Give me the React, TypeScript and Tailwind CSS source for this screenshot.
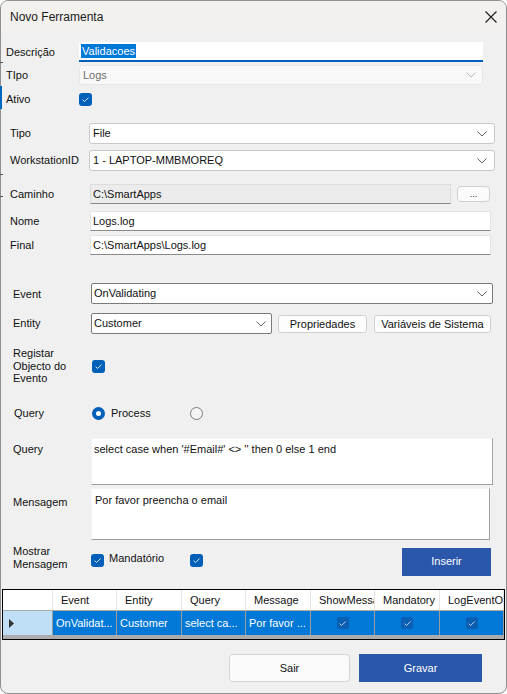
import React from 'react'

const font = "font-['Liberation_Sans',Arial,sans-serif]"

function Tick({ color = '#ffffff' }: { color?: string }) {
  return (
    <svg width="9" height="9" viewBox="0 0 9 9">
      <path d="M1.6 4.7 L3.6 6.5 L7.6 2.5" stroke={color} strokeWidth="1" fill="none" />
    </svg>
  )
}

function CheckBox() {
  return (
    <span className="w-[13px] h-[13px] rounded-[3px] bg-[#005fb8] flex items-center justify-center shrink-0">
      <Tick color="#dbe8f7" />
    </span>
  )
}

function Chevron({ color = '#606060' }: { color?: string }) {
  return (
    <svg width="10" height="6" viewBox="0 0 10 6">
      <path d="M0.5 0.5 L5 5 L9.5 0.5" stroke={color} strokeWidth="1" fill="none" />
    </svg>
  )
}

function Label({ children, className = '' }: { children: React.ReactNode; className?: string }) {
  return <span className={`shrink-0 text-[11px] text-[#111] ${className}`}>{children}</span>
}

function GridHead({ w, children }: { w: string; children?: React.ReactNode }) {
  return (
    <div className={`${w} h-full shrink-0 border-r border-[#e6e6e6] pl-[8px] flex items-center overflow-hidden whitespace-nowrap text-[11px] text-[#111]`}>
      {children}
    </div>
  )
}

function GridCell({ w, children, center }: { w: string; children?: React.ReactNode; center?: boolean }) {
  return (
    <div
      className={`${w} h-full shrink-0 border-r border-[#9c9c9c] flex items-center overflow-hidden whitespace-nowrap text-[11px] text-white bg-[#0078d7] ${
        center ? 'justify-center' : 'pl-[3px]'
      }`}
    >
      {children}
    </div>
  )
}

function GridCheck() {
  return (
    <span className="w-[12px] h-[12px] rounded-[2px] bg-[#0a5fb3] flex items-center justify-center">
      <Tick color="#b9d3ef" />
    </span>
  )
}

export default function App() {
  return (
    <div className={`${font} relative w-[507px] h-[694px] bg-white overflow-hidden`}>
      <div className="w-[507px] h-[694px] rounded-[8px] border border-[#8f8f8f] bg-[#f0f0f0] overflow-hidden flex flex-col">
        {/* title bar */}
        <div className="h-[32px] shrink-0 bg-[#f3f1ee] flex items-center justify-between">
          <span className="pl-[9px] text-[12px] text-[#1a1a1a]">Novo Ferramenta</span>
          <svg width="12" height="12" viewBox="0 0 12 12" className="mr-[9px]">
            <path d="M0.5 0.5 L11.5 11.5 M11.5 0.5 L0.5 11.5" stroke="#1a1a1a" strokeWidth="1.1" />
          </svg>
        </div>

        {/* Descrição */}
        <div className="flex items-center h-[20px] mt-[9px]">
          <Label className="w-[78px] pl-[5px]">Descrição</Label>
          <div className="w-[404px] h-[20px] bg-white border-b-2 border-[#005fb8] flex items-center pl-[2px]">
            <span className="bg-[#0078d7] text-white text-[11px] leading-[14px] px-[1px]">Validacoes</span>
          </div>
        </div>

        {/* TIpo disabled */}
        <div className="flex items-center h-[20px] mt-[3px]">
          <Label className="w-[78px] pl-[5px]">TIpo</Label>
          <div className="w-[404px] h-[20px] bg-[#f9f9f9] border border-[#e6e6e6] rounded-[3px] flex items-center justify-between pl-[3px] pr-[6px]">
            <span className="text-[11px] text-[#707070]">Logs</span>
            <Chevron color="#b8b8b8" />
          </div>
        </div>

        {/* Ativo */}
        <div className="flex items-center h-[16px] mt-[6px]">
          <Label className="w-[78px] pl-[5px]">Ativo</Label>
          <CheckBox />
        </div>

        {/* Tipo */}
        <div className="flex items-center h-[21px] mt-[16px]">
          <Label className="w-[88px] pl-[9px]">Tipo</Label>
          <div className="w-[406px] h-[21px] bg-white border border-[#c9c9c9] rounded-[3px] flex items-center justify-between pl-[3px] pr-[7px]">
            <span className="text-[11px] text-[#111]">File</span>
            <Chevron />
          </div>
        </div>

        {/* WorkstationID */}
        <div className="flex items-center h-[21px] mt-[6px]">
          <Label className="w-[88px] pl-[9px]">WorkstationID</Label>
          <div className="w-[406px] h-[21px] bg-white border border-[#c9c9c9] rounded-[3px] flex items-center justify-between pl-[3px] pr-[7px]">
            <span className="text-[11px] text-[#111]">1 - LAPTOP-MMBMOREQ</span>
            <Chevron />
          </div>
        </div>

        {/* Caminho */}
        <div className="flex items-center h-[20px] mt-[13px]">
          <Label className="w-[89px] pl-[9px]">Caminho</Label>
          <div className="w-[361px] h-[20px] bg-[#ececec] border border-[#dcdcdc] border-b-[#8a8a8a] flex items-center pl-[2px]">
            <span className="text-[11px] text-[#111]">C:\SmartApps</span>
          </div>
          <button className="ml-[6px] w-[33px] h-[16px] bg-[#fbfbfb] border border-[#d0d0d0] rounded-[4px] text-[9px] leading-[10px] text-[#222] flex items-end justify-center pb-[2px]">
            ...
          </button>
        </div>

        {/* Nome */}
        <div className="flex items-center h-[20px] mt-[7px]">
          <Label className="w-[89px] pl-[9px]">Nome</Label>
          <div className="w-[401px] h-[20px] bg-white border border-[#e4e4e4] border-b-[#8a8a8a] flex items-center pl-[2px]">
            <span className="text-[11px] text-[#111]">Logs.log</span>
          </div>
        </div>

        {/* Final */}
        <div className="flex items-center h-[20px] mt-[4px]">
          <Label className="w-[89px] pl-[9px]">Final</Label>
          <div className="w-[401px] h-[20px] bg-white border border-[#e4e4e4] border-b-[#8a8a8a] flex items-center pl-[2px]">
            <span className="text-[11px] text-[#111]">C:\SmartApps\Logs.log</span>
          </div>
        </div>

        {/* Event */}
        <div className="flex items-center h-[21px] mt-[28px]">
          <Label className="w-[90px] pl-[12px] pt-[2px]">Event</Label>
          <div className="w-[402px] h-[21px] bg-white border border-[#7a7a7a] rounded-[2px] flex items-center justify-between pl-[2px] pr-[5px]">
            <span className="text-[11px] text-[#111]">OnValidating</span>
            <Chevron />
          </div>
        </div>

        {/* Entity */}
        <div className="flex items-start h-[21px] mt-[9px]">
          <Label className="w-[90px] pl-[12px] pt-[2px]">Entity</Label>
          <div className="w-[181px] h-[21px] bg-white border border-[#7a7a7a] rounded-[2px] flex items-center justify-between pl-[2px] pr-[5px]">
            <span className="text-[11px] text-[#111]">Customer</span>
            <Chevron />
          </div>
          <button className="ml-[6px] mt-[2px] w-[89px] h-[18px] bg-[#fdfdfd] border border-[#d0d0d0] rounded-[3px] text-[11px] text-[#111] flex items-center justify-center">
            Propriedades
          </button>
          <button className="ml-[7px] mt-[2px] w-[117px] h-[18px] bg-[#fdfdfd] border border-[#d0d0d0] rounded-[3px] text-[11px] text-[#111] flex items-center justify-center">
            Variáveis de Sistema
          </button>
        </div>

        {/* Registar Objecto do Evento */}
        <div className="flex items-center h-[38px] mt-[13px]">
          <Label className="w-[91px] pl-[12px] leading-[12.5px]">
            Registar
            <br />
            Objecto do
            <br />
            Evento
          </Label>
          <CheckBox />
        </div>

        {/* Query radio */}
        <div className="flex items-center h-[16px] mt-[20px]">
          <Label className="w-[91px] pl-[13px]">Query</Label>
          <span className="w-[13px] h-[13px] rounded-full bg-[#005fb8] flex items-center justify-center shrink-0">
            <span className="w-[5px] h-[5px] rounded-full bg-white" />
          </span>
          <span className="ml-[6px] text-[11px] text-[#111] w-[79px]">Process</span>
          <span className="w-[13px] h-[13px] rounded-full border border-[#7b7b7b] bg-[#f4f4f4] shrink-0" />
        </div>

        {/* Query text */}
        <div className="flex items-start h-[47px] mt-[17px]">
          <Label className="w-[90px] pl-[12px] pt-[3px]">Query</Label>
          <div className="w-[402px] h-[47px] bg-white border border-[#f4f4f4] border-b-[#a0a0a0] border-r-[#a0a0a0] pl-[2px] pt-[3px] text-[11px] leading-[14px] text-[#111]">
            select case when '#Email#' &lt;&gt; '' then 0 else 1 end
          </div>
        </div>

        {/* Mensagem */}
        <div className="flex items-start h-[52px] mt-[3px]">
          <Label className="w-[90px] pl-[12px] pt-[6px]">Mensagem</Label>
          <div className="w-[399px] h-[52px] bg-white border border-[#f4f4f4] border-b-[#a0a0a0] border-r-[#a0a0a0] pl-[3px] pt-[4px] text-[11px] leading-[14px] text-[#111]">
            Por favor preencha o email
          </div>
        </div>

        {/* Mostrar Mensagem */}
        <div className="flex items-center h-[33px] mt-[1px]">
          <Label className="w-[90px] pl-[12px] leading-[13px]">
            Mostrar
            <br />
            Mensagem
          </Label>
          <div className="mt-[5px] flex items-center">
            <CheckBox />
            <span className="ml-[5px] text-[11px] text-[#111] w-[81px] -mt-[3px]">Mandatório</span>
            <CheckBox />
          </div>
          <button className="ml-[199px] mt-[8px] w-[89px] h-[28px] bg-[#2b57ab] text-white text-[11px] flex items-center justify-center">
            Inserir
          </button>
        </div>

        {/* grid */}
        <div className="mt-[15px] ml-[1px] w-[503px] h-[51px] shrink-0 border border-black bg-[#acacac] overflow-hidden">
          <div className="flex h-[20px] bg-white">
            <GridHead w="w-[50px]" />
            <GridHead w="w-[64px]">Event</GridHead>
            <GridHead w="w-[65px]">Entity</GridHead>
            <GridHead w="w-[64px]">Query</GridHead>
            <GridHead w="w-[65px]">Message</GridHead>
            <GridHead w="w-[64px]">ShowMessage</GridHead>
            <GridHead w="w-[65px]">Mandatory</GridHead>
            <GridHead w="w-[64px]">LogEventObject</GridHead>
          </div>
          <div className="flex h-[24px] mt-[1px]">
            <div className="w-[50px] h-full shrink-0 bg-[#bfdff6] border-r border-[#9c9c9c] flex items-center pl-[6px]">
              <svg width="5" height="9" viewBox="0 0 5 9">
                <path d="M0 0 L5 4.5 L0 9 Z" fill="#333" />
              </svg>
            </div>
            <GridCell w="w-[64px]">OnValidat...</GridCell>
            <GridCell w="w-[65px]">Customer</GridCell>
            <GridCell w="w-[64px]">select ca...</GridCell>
            <GridCell w="w-[65px]">Por favor ...</GridCell>
            <GridCell w="w-[64px]" center>
              <GridCheck />
            </GridCell>
            <GridCell w="w-[65px]" center>
              <GridCheck />
            </GridCell>
            <GridCell w="w-[64px]" center>
              <GridCheck />
            </GridCell>
          </div>
        </div>

        {/* bottom buttons */}
        <div className="flex items-center h-[28px] mt-[14px]">
          <button className="ml-[228px] w-[121px] h-[28px] bg-[#fbfbfb] border border-[#d3d3d3] rounded-[4px] text-[11px] text-[#111]">
            Sair
          </button>
          <button className="ml-[9px] w-[123px] h-[28px] bg-[#2b57ab] text-white text-[11px]">
            Gravar
          </button>
        </div>
      </div>

      {/* stray edges of the window behind */}
      <div className="absolute left-0 top-[62px] w-[3px] h-[1px] bg-[#555]" />
      <div className="absolute left-0 top-[86px] w-[2px] h-[23px] bg-[#0067c0]" />
      <div className="absolute left-0 top-[174px] w-[3px] h-[1px] bg-[#555]" />
      <div className="absolute left-0 top-[196px] w-[3px] h-[1px] bg-[#555]" />
    </div>
  )
}
